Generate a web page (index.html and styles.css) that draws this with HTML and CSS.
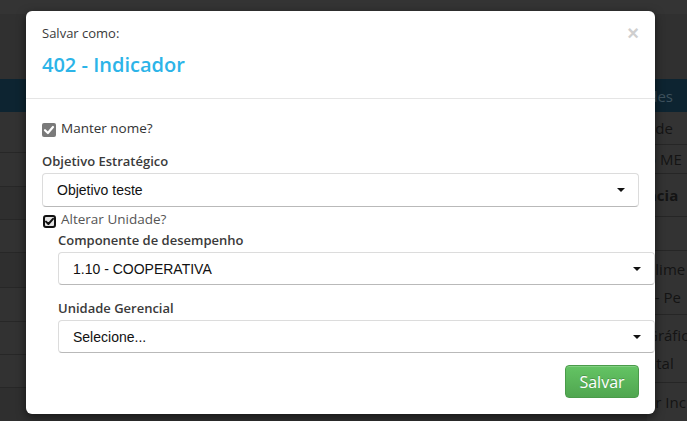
FILE: index.html
```html
<!DOCTYPE html>
<html lang="pt-BR">
<head>
<meta charset="utf-8">
<title>Salvar como</title>
<link rel="stylesheet" href="styles.css">
</head>
<body>
<div class="page">
  <div class="topbar"></div>
  <div class="gap-top"></div>
  <div class="band">
    <span class="band-text">Prioridades</span>
  </div>
  <div class="rows">
    <div class="left-col">
      <div class="lrow r1"></div>
      <div class="lrow r2"></div>
      <div class="lrow r3 alt"></div>
      <div class="lrow r4"></div>
      <div class="lrow r5 alt"></div>
      <div class="lrow r6"></div>
      <div class="lrow r7"></div>
      <div class="lrow r8"></div>
    </div>
    <div class="right-col">
      <div class="rrow h1"><span>ade</span></div>
      <div class="rrow h2"><span>o ME</span></div>
      <div class="rrow h3"><span class="bold">ncia</span></div>
      <div class="rrow h4"></div>
      <div class="rrow h5"><span>alime</span><span>l - Pe</span></div>
      <div class="rrow h6"><span>Gráfic</span><span>ntal</span></div>
      <div class="rrow h7"><span>ar Inc</span></div>
    </div>
  </div>
</div>

<div class="modal">
  <div class="modal-header">
    <div class="subtitle">Salvar como:</div>
    <h4 class="title">402 - Indicador</h4>
    <span class="close">&times;</span>
  </div>
  <div class="modal-body">
    <label class="check-row">
      <span class="cb cb-grey">
        <svg viewBox="0 0 14 14" width="14" height="14"><path d="M3 7.2 L5.9 10 L11 4" fill="none" stroke="#fff" stroke-width="2.2" stroke-linecap="round" stroke-linejoin="round"/></svg>
      </span>
      <span class="check-text">Manter nome?</span>
    </label>

    <div class="field f-first">
      <div class="label">Objetivo Estratégico</div>
      <div class="select"><span>Objetivo teste</span><i class="caret"></i></div>
    </div>

    <label class="check-row cr2">
      <span class="cb cb-dark">
        <svg viewBox="0 0 13 13" width="13" height="13"><path d="M3 6.6 L5.4 9 L10 3.8" fill="none" stroke="#111" stroke-width="2" stroke-linecap="round" stroke-linejoin="round"/></svg>
      </span>
      <span class="check-text light">Alterar Unidade?</span>
    </label>

    <div class="indent">
      <div class="field f-comp">
        <div class="label">Componente de desempenho</div>
        <div class="select s-short"><span>1.10 - COOPERATIVA</span><i class="caret"></i></div>
      </div>
      <div class="field f-unid">
        <div class="label">Unidade Gerencial</div>
        <div class="select s-short"><span>Selecione...</span><i class="caret"></i></div>
      </div>
    </div>

    <div class="actions">
      <button class="btn-save" type="button">Salvar</button>
    </div>
  </div>
</div>
</body>
</html>
```

FILE: styles.css
```css
* { box-sizing: border-box; }

html, body {
  margin: 0;
  padding: 0;
}

body {
  width: 687px;
  height: 421px;
  overflow: hidden;
  background: #2f2f2f;
  font-family: "Open Sans", "Liberation Sans", sans-serif;
  position: relative;
}

/* ---------- dimmed page behind the modal ---------- */
.page {
  display: flex;
  flex-direction: column;
  height: 421px;
}

.topbar {
  height: 14px;
  background: #343434;
}

.gap-top {
  height: 65px;
  background: #303030;
}

.band {
  height: 33px;
  background: #0d2431;
  display: flex;
  justify-content: flex-end;
  align-items: center;
  padding-right: 14px;
}

.band-text {
  color: #3e525e;
  font-size: 15px;
  white-space: nowrap;
}

.rows {
  display: flex;
  flex: 1;
}

.left-col {
  flex: 1;
  display: flex;
  flex-direction: column;
}

.lrow {
  border-bottom: 1px solid #272727;
  background: #323232;
}
.lrow.alt { background: #2f2f2f; }
.r1 { height: 41px; }
.r2 { height: 34px; }
.r3 { height: 33px; }
.r4 { height: 33px; }
.r5 { height: 35px; }
.r6 { height: 34px; }
.r7 { height: 33px; }
.r8 { height: 33px; }

.right-col {
  width: 40px;
  display: flex;
  flex-direction: column;
  background: #333;
  font-size: 15px;
  color: #141414;
  white-space: nowrap;
  overflow: hidden;
}

.rrow {
  border-bottom: 1px solid #262626;
  display: flex;
  flex-direction: column;
  justify-content: center;
}
.rrow span { line-height: 28px; }
.rrow .bold { font-weight: 700; }
.h1 { height: 33px; }
.h2 { height: 29px; }
.h3 { height: 43px; }
.h4 { height: 34px; }
.h5 { height: 64px; }
.h6 { height: 68px; }
.h7 { flex: 1; border-bottom: 0; }

/* ---------- modal ---------- */
.modal {
  position: absolute;
  left: 26px;
  top: 11px;
  width: 629px;
  height: 403px;
  background: #fff;
  border-radius: 6px;
  box-shadow: 0 3px 10px rgba(0, 0, 0, 0.55);
  display: flex;
  flex-direction: column;
}

.modal-header {
  position: relative;
  padding: 13px 16px 19px 16px;
  border-bottom: 1px solid #e5e5e5;
}

.subtitle {
  font-size: 13px;
  line-height: 18px;
  color: #3a3a3a;
}

.title {
  margin: 9px 0 0 0;
  font-size: 20px;
  line-height: 28px;
  font-weight: 600;
  color: #2cb4e8;
}

.close {
  position: absolute;
  right: 16px;
  top: 10px;
  font-size: 20px;
  line-height: 24px;
  font-weight: 700;
  color: #cfcfcf;
  font-family: "Liberation Sans", sans-serif;
}

.modal-body {
  padding: 20px 16px 0 16px;
  display: flex;
  flex-direction: column;
}

.check-row {
  display: flex;
  align-items: center;
  height: 18px;
}

.cb {
  display: inline-flex;
  align-items: center;
  justify-content: center;
  flex: none;
}

.cb-grey {
  width: 14px;
  height: 14px;
  border-radius: 2px;
  background: #7a7a7a;
  margin-top: 4px;
  margin-right: 5px;
}

.cb-dark {
  width: 13px;
  height: 13px;
  border-radius: 3px;
  border: 2px solid #111;
  background: #e4e4e4;
  margin-left: 1px;
  margin-top: 5px;
  margin-right: 5px;
}
.cb-dark svg { margin: -2px; flex: none; }

.check-text {
  font-size: 13.5px;
  line-height: 18px;
  color: #333;
}
.check-text.light { color: #555; }

.field { display: flex; flex-direction: column; }
.f-first { margin-top: 15px; }
.cr2 { margin-top: 3px; }
.f-comp { margin-top: 3px; }
.f-unid { margin-top: 14px; }

.label {
  font-size: 13px;
  line-height: 18px;
  font-weight: 600;
  color: #3a3a3a;
  margin-bottom: 3px;
}

.select {
  position: relative;
  height: 34px;
  border: 1px solid #dcdcdc;
  border-bottom-color: #b9b9b9;
  border-radius: 4px;
  background: #fff;
  display: flex;
  align-items: center;
  padding-left: 14px;
  font-family: "Liberation Sans", Arial, sans-serif;
  font-size: 14px;
  color: #111;
}
.select.s-short { height: 33px; }

.caret {
  position: absolute;
  right: 13px;
  top: 50%;
  margin-top: -2px;
  width: 0;
  height: 0;
  border-left: 4px solid transparent;
  border-right: 4px solid transparent;
  border-top: 4px solid #111;
}

.indent {
  margin-left: 16px;
  margin-right: -16px;
  display: flex;
  flex-direction: column;
}

.actions {
  display: flex;
  justify-content: flex-end;
  margin-top: 12px;
}

.btn-save {
  width: 74px;
  height: 33px;
  border-radius: 4px;
  border: 1px solid #4a9b4a;
  background: linear-gradient(#64c464, #50a650);
  color: #fff;
  font-family: "Open Sans", "Liberation Sans", sans-serif;
  font-size: 16px;
  text-shadow: 0 -1px 0 rgba(0, 0, 0, 0.2);
  padding: 0;
  box-shadow: inset 0 1px 0 rgba(255,255,255,.2);
}
```
